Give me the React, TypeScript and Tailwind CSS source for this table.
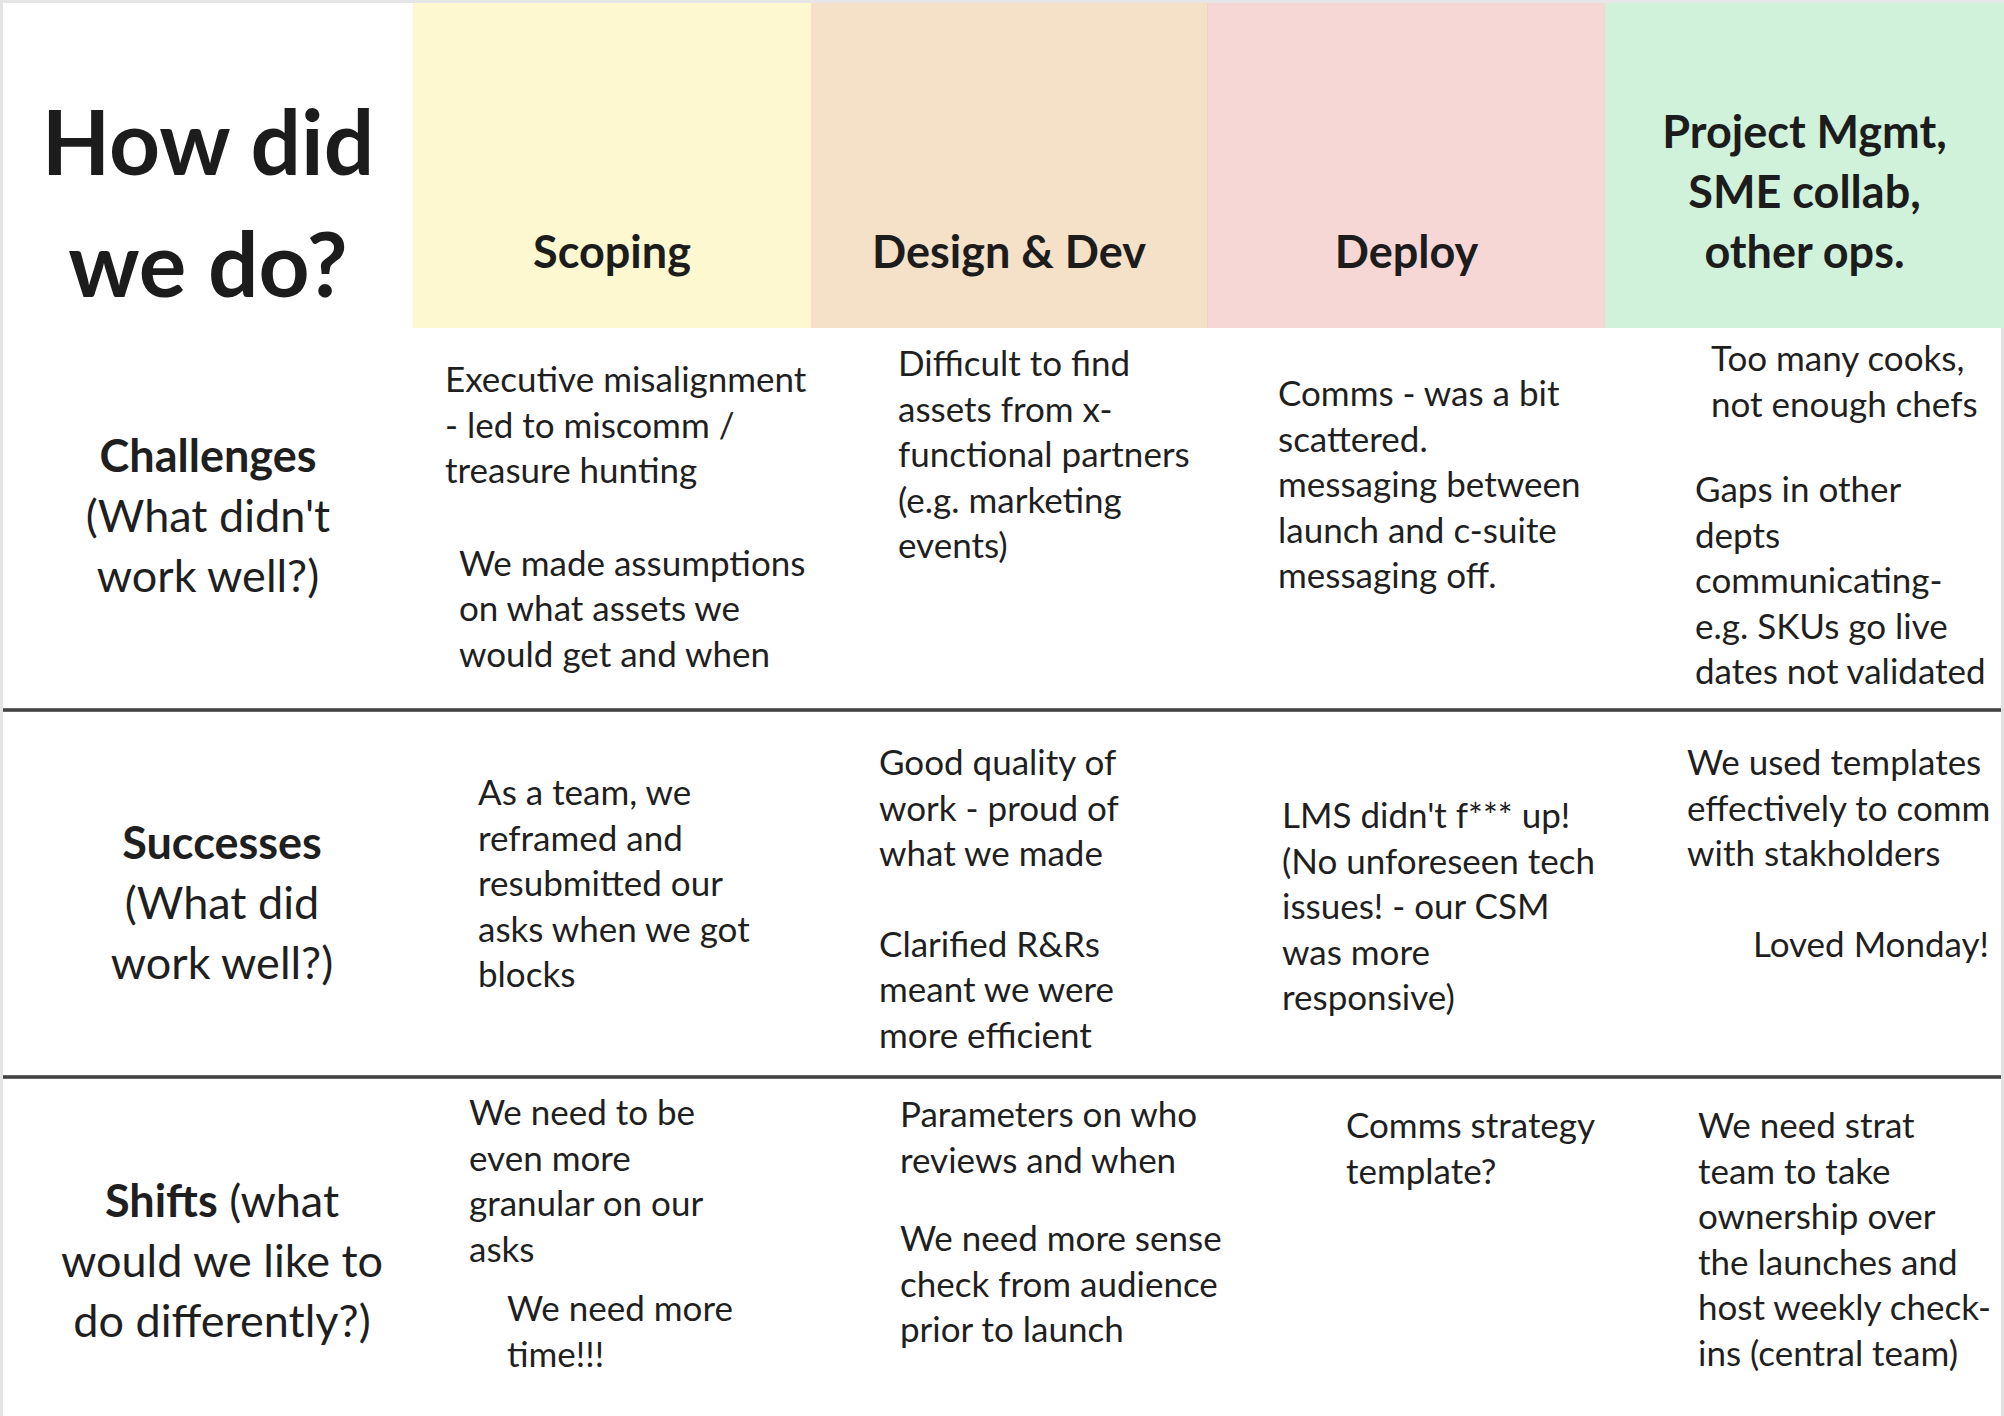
import React from "react";

// Retro board — "How did we do?" grid with coloured phase columns

const FONT = { fontFamily: "Lato, 'Open Sans', sans-serif" };

function Lines({ lines, className = "" }: { lines: string[]; className?: string }) {
  return (
    <div className={className}>
      {lines.map((l, i) => (
        <div key={i} className="whitespace-nowrap">{l}</div>
      ))}
    </div>
  );
}

const body = "text-[35px] leading-[45.5px] text-[#1f1f1f]";
const label = "text-[45px] leading-[60px] text-[#1f1f1f] text-center";

function Divider() {
  return <div className="h-[4px] bg-[#444] border-y border-[#666]" />;
}

export default function App() {
  return (
    <div style={FONT} className="w-[2004px] h-[1416px] overflow-hidden bg-white flex flex-col border-l-[3px] border-[#e4e4e4]">
      {/* spreadsheet-ish top strip */}
      <div className="h-[3px] bg-[#e6e6e6]" />

      {/* header */}
      <div className="grid grid-cols-[410px_398px_397px_397px_1fr] h-[325px]">
        <div className="pt-[77px] text-center text-[89px] leading-[122px] font-bold text-[#1c1c1c]">
          <div>How did</div>
          <div>we do?</div>
        </div>
        <div className="bg-[#fef8d0] flex items-end justify-center pb-[47px] text-[45px] leading-[60px] font-bold text-[#1c1c1c]">Scoping</div>
        <div className="bg-[#f5e1c7] border-r border-[#f2cfc6] flex items-end justify-center pb-[47px] text-[45px] leading-[60px] font-bold text-[#1c1c1c]">Design &amp; Dev</div>
        <div className="bg-[#f7d7d6] flex items-end justify-center pb-[47px] text-[45px] leading-[60px] font-bold text-[#1c1c1c]">Deploy</div>
        <div className="bg-[#d0f2da] flex flex-col items-center justify-end pb-[47px] text-[45px] leading-[60px] font-bold text-[#1c1c1c] text-center">
          <div>Project Mgmt,</div>
          <div>SME collab,</div>
          <div>other ops.</div>
        </div>
      </div>

      <div className="flex-1 flex flex-col border-r-[3px] border-[#e0e0e0]">
        {/* Challenges */}
        <div className="grid grid-cols-[410px_398px_397px_397px_1fr] h-[380px] pt-px">
          <div className={`${label} pt-[96px]`}>
            <div className="font-bold">Challenges</div>
            <div>(What didn't</div>
            <div>work well?)</div>
          </div>
          <div className="flex flex-col pt-[27px]">
            <Lines className={`${body} ml-[32px]`} lines={["Executive misalignment", "- led to miscomm /", "treasure hunting"]} />
            <Lines className={`${body} ml-[46px] mt-[47px]`} lines={["We made assumptions", "on what assets we", "would get and when"]} />
          </div>
          <div className="pt-[11px]">
            <Lines className={`${body} ml-[87px]`} lines={["Difficult to find", "assets from x-", "functional partners", "(e.g. marketing", "events)"]} />
          </div>
          <div className="pt-[41px]">
            <Lines className={`${body} ml-[70px]`} lines={["Comms - was a bit", "scattered.", "messaging between", "launch and c-suite", "messaging off."]} />
          </div>
          <div className="flex flex-col pt-[6px]">
            <Lines className={`${body} ml-[106px]`} lines={["Too many cooks,", "not enough chefs"]} />
            <Lines className={`${body} ml-[90px] mt-[40px]`} lines={["Gaps in other", "depts", "communicating-", "e.g. SKUs go live", "dates not validated"]} />
          </div>
        </div>

        <Divider />

        {/* Successes */}
        <div className="grid grid-cols-[410px_398px_397px_397px_1fr] h-[363px]">
          <div className={`${label} pt-[100px] pl-[28px]`}>
            <div className="font-bold">Successes</div>
            <div>(What did</div>
            <div>work well?)</div>
          </div>
          <div className="pt-[57px]">
            <Lines className={`${body} ml-[65px]`} lines={["As a team, we", "reframed and", "resubmitted our", "asks when we got", "blocks"]} />
          </div>
          <div className="flex flex-col pt-[27px]">
            <Lines className={`${body} ml-[68px]`} lines={["Good quality of", "work - proud of", "what we made"]} />
            <Lines className={`${body} ml-[68px] mt-[45px]`} lines={["Clarified R&Rs", "meant we were", "more efficient"]} />
          </div>
          <div className="pt-[80px]">
            <Lines className={`${body} ml-[74px]`} lines={["LMS didn't f*** up!", "(No unforeseen tech", "issues! - our CSM", "was more", "responsive)"]} />
          </div>
          <div className="flex flex-col pt-[27px]">
            <Lines className={`${body} ml-[82px]`} lines={["We used templates", "effectively to comm", "with stakholders"]} />
            <Lines className={`${body} ml-[148px] mt-[45px]`} lines={["Loved Monday!"]} />
          </div>
        </div>

        <Divider />

        {/* Shifts */}
        <div className="grid grid-cols-[410px_398px_397px_397px_1fr] flex-1">
          <div className={`${label} pt-[91px] pl-[28px]`}>
            <div><span className="font-bold">Shifts</span> (what</div>
            <div>would we like to</div>
            <div>do differently?)</div>
          </div>
          <div className="flex flex-col pt-[10px]">
            <Lines className={`${body} ml-[56px]`} lines={["We need to be", "even more", "granular on our", "asks"]} />
            <Lines className={`${body} ml-[94px] mt-[14px]`} lines={["We need more", "time!!!"]} />
          </div>
          <div className="flex flex-col pt-[12px]">
            <Lines className={`${body} ml-[89px]`} lines={["Parameters on who", "reviews and when"]} />
            <Lines className={`${body} ml-[89px] mt-[33px]`} lines={["We need more sense", "check from audience", "prior to launch"]} />
          </div>
          <div className="pt-[23px]">
            <Lines className={`${body} ml-[138px]`} lines={["Comms strategy", "template?"]} />
          </div>
          <div className="pt-[23px]">
            <Lines className={`${body} ml-[93px]`} lines={["We need strat", "team to take", "ownership over", "the launches and", "host weekly check-", "ins (central team)"]} />
          </div>
        </div>
      </div>
    </div>
  );
}
